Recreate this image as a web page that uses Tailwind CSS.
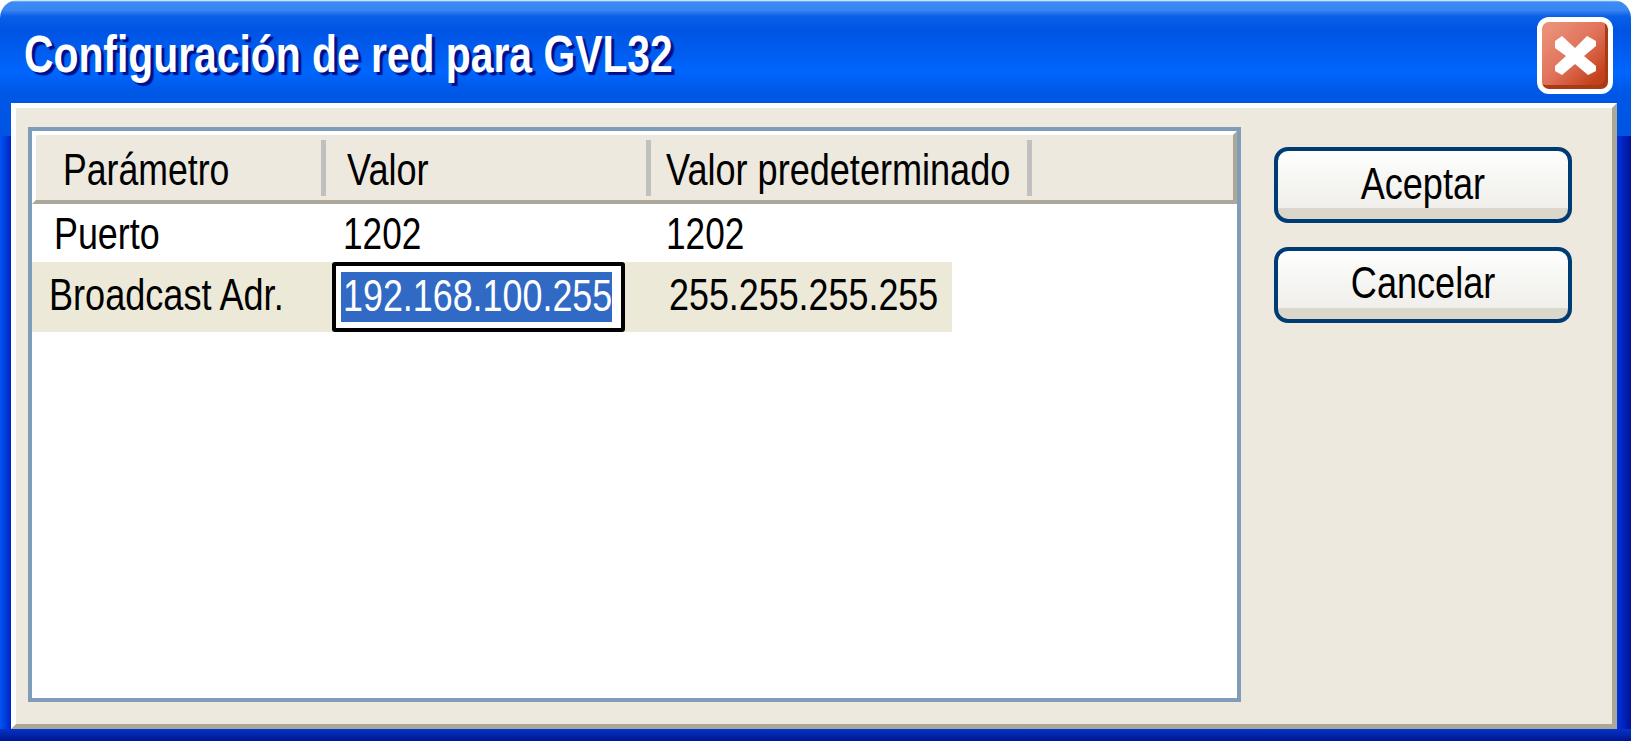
<!DOCTYPE html>
<html lang="es">
<head>
    <meta charset="UTF-8">
    <title>Configuración de red para GVL32</title>
    <script src="https://cdn.jsdelivr.net/npm/@tailwindcss/browser@4"></script>
</head>
<body class="bg-white m-0 overflow-hidden">
<div class="w-[1631px] h-[741px] flex flex-col font-['Liberation_Sans',Arial,sans-serif] text-black leading-none">

    <!-- Title bar -->
    <div class="h-[136px] -mb-[33px] rounded-t-[18px] pt-px bg-[linear-gradient(180deg,#ffffff_0px,#3a8cf6_2px,#3a86f2_10px,#0b60e8_16px,#0054e3_30px,#0060f4_60px,#0066ff_72px,#0058e6_90px,#0054e3_136px)]">
        <div class="h-[102px] flex items-start justify-between pl-[24px] pr-[18px]">
            <span class="mt-[27px] inline-block origin-left scale-x-[0.785] whitespace-nowrap font-bold text-[52px] text-white [text-shadow:4px_3px_1px_#00108c]">Configuración de red para GVL32</span>
            <div class="mt-[16px] w-[76px] h-[77px] rounded-[12px] border-[5px] border-white bg-[linear-gradient(135deg,#ea9078_10%,#e07058_50%,#c2401a_85%)] shadow-[inset_-3px_-4px_0_#a93a16] flex items-center justify-center">
                <svg width="41" height="39" viewBox="0 0 41 39"><path d="M0 12V5L7 0L20 12L32 0L41 5V10L29 20L41 30V35L33 39L20 28L7 39L0 35V30L11 20Z" fill="#fff"/></svg>
            </div>
        </div>
    </div>

    <div class="flex-1 flex min-h-0">
        <!-- Left frame -->
        <div class="w-[11px] flex flex-col">
            <div class="h-[33px]"></div>
            <div class="flex-1 bg-[linear-gradient(90deg,#0054f0,#0024c8)]"></div>
        </div>

        <!-- Panel -->
        <div class="w-[1606px] z-10 border-[5px] border-t-white border-l-white border-r-[#aca899] border-b-[#aca899] bg-[#ede9de] flex pt-[19px] pl-[12px]">
            <!-- Table -->
            <div class="w-[1213px] h-[575px] border-[4px] border-[#7f9db9] bg-white shrink-0">
                <div class="h-[73px] border-[4px] border-t-white border-l-white border-r-[#aca899] border-b-[#aca899] bg-[#ede9de] flex items-center text-[44px]">
                    <div class="w-[290px] h-[56px] flex items-center pl-[27px] pt-[4px] border-r-[5px] border-r-[#c0c0c0]"><span class="inline-block origin-left scale-x-[0.81] whitespace-nowrap">Parámetro</span></div>
                    <div class="w-[325px] h-[56px] flex items-center pl-[21px] pt-[4px] border-r-[5px] border-r-[#c0c0c0]"><span class="inline-block origin-left scale-x-[0.82] whitespace-nowrap">Valor</span></div>
                    <div class="w-[381px] h-[56px] flex items-center pl-[15px] pt-[4px] border-r-[5px] border-r-[#c0c0c0]"><span class="inline-block origin-left scale-x-[0.82] whitespace-nowrap">Valor predeterminado</span></div>
                </div>
                <div class="h-[58px] flex items-center pt-[2px] text-[44px]">
                    <div class="w-[311px] pl-[22px]"><span class="inline-block origin-left scale-x-[0.815] whitespace-nowrap">Puerto</span></div>
                    <div class="w-[323px]"><span class="inline-block origin-left scale-x-[0.8] whitespace-nowrap">1202</span></div>
                    <div><span class="inline-block origin-left scale-x-[0.8] whitespace-nowrap">1202</span></div>
                </div>
                <div class="w-[920px] h-[70px] bg-[#ece9d8] flex items-center text-[44px]">
                    <div class="w-[300px] pl-[17px] pb-[5px] shrink-0"><span class="inline-block origin-left scale-x-[0.82] whitespace-nowrap">Broadcast Adr.</span></div>
                    <div class="w-[293px] h-[70px] shrink-0 border-[4px] border-black rounded-[3px] bg-white flex items-center pl-[5px]">
                        <div class="w-[271px] h-[50px] bg-[#316ac5] text-white flex items-center pl-[2px] pb-[2px]"><span class="inline-block origin-left scale-x-[0.815] whitespace-nowrap">192.168.100.255</span></div>
                    </div>
                    <div class="pl-[44px] pb-[5px]"><span class="inline-block origin-left scale-x-[0.815] whitespace-nowrap">255.255.255.255</span></div>
                </div>
            </div>

            <!-- Buttons -->
            <div class="ml-[33px] flex flex-col gap-[24px] pt-[20px]">
                <button class="w-[298px] h-[76px] rounded-[14px] border-[4px] border-[#003c74] bg-[linear-gradient(180deg,#ffffff_0%,#f5f5f2_45%,#f0efeb_83%,#dcd7cb_84%,#dcd7cb_100%)] flex items-center justify-center pb-[3px] text-[44px]"><span class="inline-block scale-x-[0.82] whitespace-nowrap">Aceptar</span></button>
                <button class="w-[298px] h-[76px] rounded-[14px] border-[4px] border-[#003c74] bg-[linear-gradient(180deg,#ffffff_0%,#f5f5f2_45%,#f0efeb_83%,#dcd7cb_84%,#dcd7cb_100%)] flex items-center justify-center pb-[5px] text-[44px]"><span class="inline-block scale-x-[0.82] whitespace-nowrap">Cancelar</span></button>
            </div>
        </div>

        <!-- Right frame -->
        <div class="w-[14px] flex flex-col">
            <div class="h-[33px]"></div>
            <div class="flex-1 bg-[linear-gradient(90deg,#0034dc,#00119a)]"></div>
        </div>
    </div>

    <!-- Bottom frame -->
    <div class="h-[12px] bg-[linear-gradient(180deg,#0434c8,#001590)]"></div>
</div>
</body>
</html>
